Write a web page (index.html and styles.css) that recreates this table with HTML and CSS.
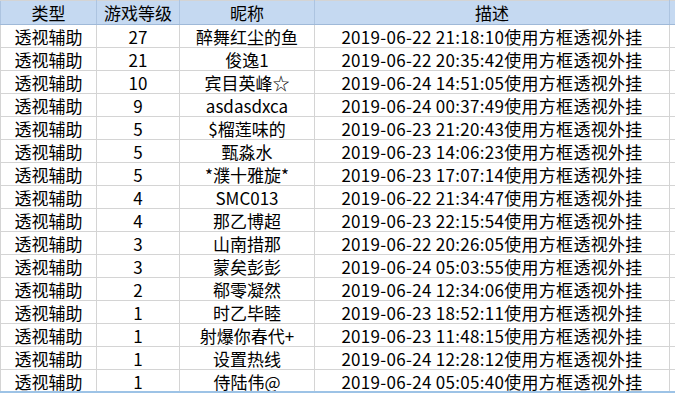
FILE: index.html
```html
<!DOCTYPE html>
<html lang="zh">
<head>
<meta charset="utf-8">
<link rel="stylesheet" href="styles.css">
</head>
<body>
<div class="sheet">
<table class="grid">
  <colgroup>
    <col class="c1"><col class="c2"><col class="c3"><col class="c4"><col class="c5">
  </colgroup>
  <thead>
    <tr><th>类型</th><th>游戏等级</th><th>昵称</th><th>描述</th><th></th></tr>
  </thead>
  <tbody>
    <tr><td>透视辅助</td><td>27</td><td>醉舞红尘的鱼</td><td>2019-06-22 21:18:10使用方框透视外挂</td><td></td></tr>
    <tr><td>透视辅助</td><td>21</td><td>俊逸1</td><td>2019-06-22 20:35:42使用方框透视外挂</td><td></td></tr>
    <tr><td>透视辅助</td><td>10</td><td>宾目英峰☆</td><td>2019-06-24 14:51:05使用方框透视外挂</td><td></td></tr>
    <tr><td>透视辅助</td><td>9</td><td>asdasdxca</td><td>2019-06-24 00:37:49使用方框透视外挂</td><td></td></tr>
    <tr><td>透视辅助</td><td>5</td><td>$榴莲味的</td><td>2019-06-23 21:20:43使用方框透视外挂</td><td></td></tr>
    <tr><td>透视辅助</td><td>5</td><td>甄淼水</td><td>2019-06-23 14:06:23使用方框透视外挂</td><td></td></tr>
    <tr><td>透视辅助</td><td>5</td><td>*濮十雅旋*</td><td>2019-06-23 17:07:14使用方框透视外挂</td><td></td></tr>
    <tr><td>透视辅助</td><td>4</td><td>SMC013</td><td>2019-06-22 21:34:47使用方框透视外挂</td><td></td></tr>
    <tr><td>透视辅助</td><td>4</td><td>那乙博超</td><td>2019-06-23 22:15:54使用方框透视外挂</td><td></td></tr>
    <tr><td>透视辅助</td><td>3</td><td>山南措那</td><td>2019-06-22 20:26:05使用方框透视外挂</td><td></td></tr>
    <tr><td>透视辅助</td><td>3</td><td>蒙矣彭彭</td><td>2019-06-24 05:03:55使用方框透视外挂</td><td></td></tr>
    <tr><td>透视辅助</td><td>2</td><td>郗零凝然</td><td>2019-06-24 12:34:06使用方框透视外挂</td><td></td></tr>
    <tr><td>透视辅助</td><td>1</td><td>时乙毕睦</td><td>2019-06-23 18:52:11使用方框透视外挂</td><td></td></tr>
    <tr><td>透视辅助</td><td>1</td><td>射爆你春代+</td><td>2019-06-23 11:48:15使用方框透视外挂</td><td></td></tr>
    <tr><td>透视辅助</td><td>1</td><td>设置热线</td><td>2019-06-24 12:28:12使用方框透视外挂</td><td></td></tr>
    <tr><td>透视辅助</td><td>1</td><td>侍陆伟@</td><td>2019-06-24 05:05:40使用方框透视外挂</td><td></td></tr>
  </tbody>
</table>
</div>
</body>
</html>
```
FILE: styles.css
```css
html, body {
  margin: 0;
  padding: 0;
  background: #ffffff;
}
.sheet {
  width: 675px;
  height: 393px;
  overflow: hidden;
  border-bottom: 2px solid #9dc3e6;
  box-sizing: border-box;
}
.grid {
  border-collapse: collapse;
  table-layout: fixed;
  width: 690px;
  font-family: "Noto Sans CJK SC", "Microsoft YaHei", sans-serif;
  font-size: 17px;
  color: #000000;
}
.c1 { width: 96px; }
.c2 { width: 83px; }
.c3 { width: 135px; }
.c4 { width: 355px; }
.c5 { width: 21px; }
.grid th,
.grid td {
  border: 1px solid #d4d4d4;
  padding: 0;
  text-align: center;
  white-space: nowrap;
  overflow: hidden;
  line-height: 21px;
  font-weight: normal;
}
.grid th {
  height: 23px;
  background: #c5d9f1;
  border-color: #d4d4d4 #adc4e0 #9fb9d8 #adc4e0;
}
.grid td {
  height: 22px;
}
.grid td:nth-child(4) {
  letter-spacing: 0.3px;
}
```
